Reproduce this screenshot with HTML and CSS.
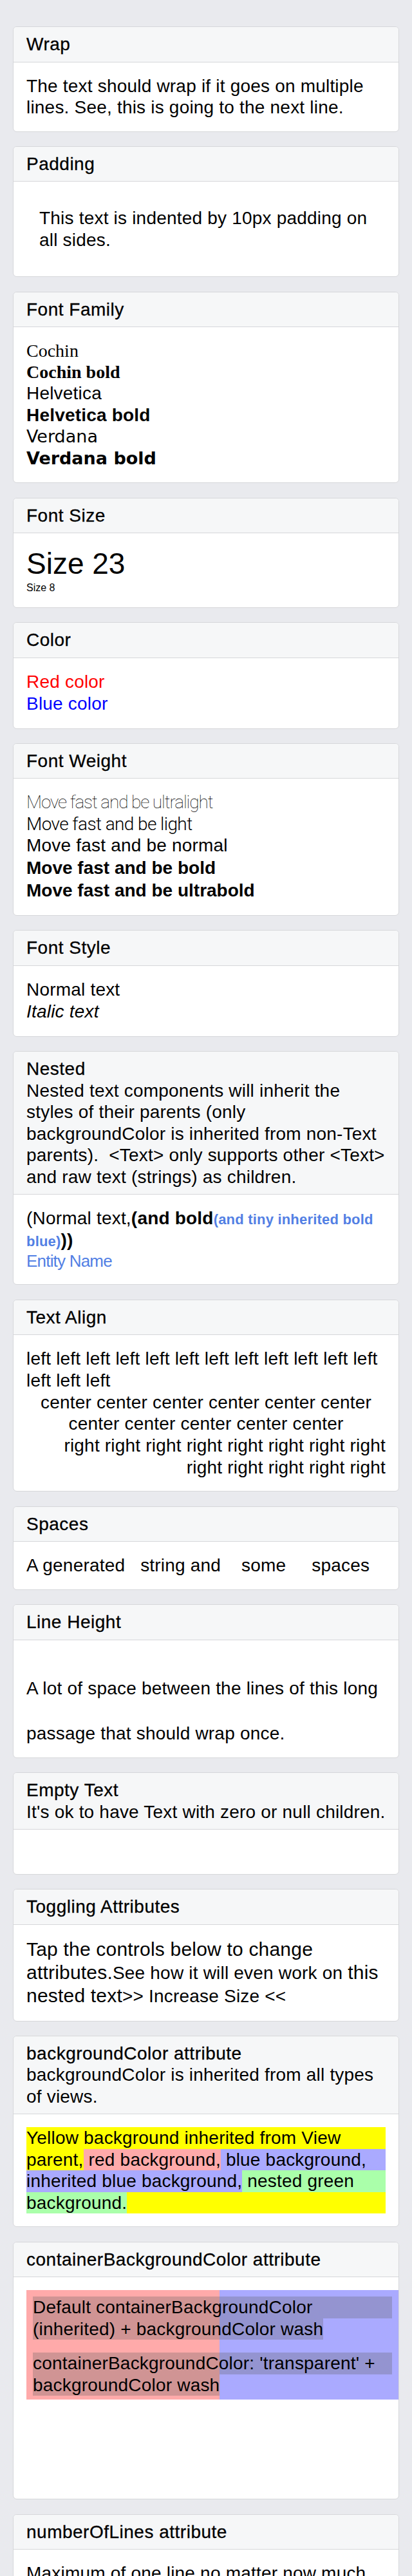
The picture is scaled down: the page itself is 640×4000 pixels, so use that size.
FILE: index.html
```html
<!DOCTYPE html>
<html lang="en">
<head>
<meta charset="utf-8">
<title>Text</title>
<link rel="stylesheet" href="styles.css">
</head>
<body>
<main class="page">

  <section class="card">
    <header class="card-head"><h2 class="card-title">Wrap</h2></header>
    <div class="card-body">
      <p class="txt">The text should wrap if it goes on multiple<br>lines. See, this is going to the next line.</p>
    </div>
  </section>

  <section class="card">
    <header class="card-head"><h2 class="card-title">Padding</h2></header>
    <div class="card-body">
      <p class="txt pad10">This text is indented by 10px padding on<br>all sides.</p>
    </div>
  </section>

  <section class="card">
    <header class="card-head"><h2 class="card-title">Font Family</h2></header>
    <div class="card-body">
      <p class="txt ff-cochin">Cochin</p>
      <p class="txt ff-cochin bold">Cochin bold</p>
      <p class="txt">Helvetica</p>
      <p class="txt bold">Helvetica bold</p>
      <p class="txt ff-verdana">Verdana</p>
      <p class="txt ff-verdana bold">Verdana bold</p>
    </div>
  </section>

  <section class="card">
    <header class="card-head"><h2 class="card-title">Font Size</h2></header>
    <div class="card-body">
      <p class="txt fs-23">Size 23</p>
      <p class="txt fs-8">Size 8</p>
    </div>
  </section>

  <section class="card">
    <header class="card-head"><h2 class="card-title">Color</h2></header>
    <div class="card-body">
      <p class="txt tall c-red">Red color</p>
      <p class="txt tall c-blue">Blue color</p>
    </div>
  </section>

  <section class="card">
    <header class="card-head"><h2 class="card-title">Font Weight</h2></header>
    <div class="card-body">
      <p class="txt fw-ultralight">Move fast and be ultralight</p>
      <p class="txt fw-light">Move fast and be light</p>
      <p class="txt">Move fast and be normal</p>
      <p class="txt fw-bold">Move fast and be bold</p>
      <p class="txt fw-bold">Move fast and be ultrabold</p>
    </div>
  </section>

  <section class="card">
    <header class="card-head"><h2 class="card-title">Font Style</h2></header>
    <div class="card-body">
      <p class="txt tall">Normal text</p>
      <p class="txt tall italic">Italic text</p>
    </div>
  </section>

  <section class="card">
    <header class="card-head">
      <h2 class="card-title">Nested</h2>
      <p class="card-desc">Nested text components will inherit the<br>styles of their parents (only<br>backgroundColor is inherited from non-Text<br>parents).&nbsp; &lt;Text&gt; only supports other &lt;Text&gt;<br>and raw text (strings) as children.</p>
    </header>
    <div class="card-body">
      <p class="txt nested">(Normal text,<b>(and bold<span class="tiny">(and tiny inherited bold<br>blue)</span>))</b></p>
      <p class="txt entity">Entity Name</p>
    </div>
  </section>

  <section class="card">
    <header class="card-head"><h2 class="card-title">Text Align</h2></header>
    <div class="card-body">
      <p class="txt align">left left left left left left left left left left left left<br>left left left</p>
      <p class="txt align center">center center center center center center<br>center center center center center</p>
      <p class="txt align right">right right right right right right right right<br>right right right right right</p>
    </div>
  </section>

  <section class="card">
    <header class="card-head"><h2 class="card-title">Spaces</h2></header>
    <div class="card-body">
      <p class="txt pre">A generated   string and    some     spaces</p>
    </div>
  </section>

  <section class="card">
    <header class="card-head"><h2 class="card-title">Line Height</h2></header>
    <div class="card-body lh-body">
      <p class="txt lh-text">A lot of space between the lines of this long<br>passage that should wrap once.</p>
    </div>
  </section>

  <section class="card">
    <header class="card-head">
      <h2 class="card-title">Empty Text</h2>
      <p class="card-desc">It's ok to have Text with zero or null children.</p>
    </header>
    <div class="card-body">
      <p class="txt empty"></p>
    </div>
  </section>

  <section class="card">
    <header class="card-head"><h2 class="card-title">Toggling Attributes</h2></header>
    <div class="card-body">
      <p class="txt toggle"><span class="t30">Tap the controls below to change<br>attributes.</span>See how it will even work on <span class="t30">this<br>nested text</span>&gt;&gt; Increase Size &lt;&lt;</p>
    </div>
  </section>

  <section class="card">
    <header class="card-head">
      <h2 class="card-title">backgroundColor attribute</h2>
      <p class="card-desc">backgroundColor is inherited from all types<br>of views.</p>
    </header>
    <div class="card-body">
      <div class="txt bg-demo">
        <div class="bg-line"><span>Yellow background inherited from View</span></div>
        <div class="bg-line"><span>parent,</span><span class="bg-red"> red background,</span><span class="bg-blue fill"> blue background,</span></div>
        <div class="bg-line"><span class="bg-blue">inherited blue background,</span><span class="bg-green fill"> nested green</span></div>
        <div class="bg-line"><span class="bg-green">background.</span></div>
      </div>
    </div>
  </section>

  <section class="card">
    <header class="card-head"><h2 class="card-title">containerBackgroundColor attribute</h2></header>
    <div class="card-body">
      <div class="cbg-bars"><div class="cbg-bar bg-red"></div><div class="cbg-bar bg-blue"></div></div>
      <div class="txt wash wash-1"><span class="wash-line full">Default containerBackgroundColor</span><span class="wash-line part">(inherited) + backgroundColor wash</span></div>
      <div class="txt wash wash-2"><span class="wash-line full">containerBackgroundColor: 'transparent' +</span><span class="wash-line part">backgroundColor wash</span></div>
    </div>
  </section>

  <section class="card">
    <header class="card-head"><h2 class="card-title">numberOfLines attribute</h2></header>
    <div class="card-body">
      <p class="txt clamp1">Maximum of one line no matter now much I write here. If I keep writing it won't go past the first line</p>
      <p class="txt clamp2">Maximum of two lines no matter now much I write here. If I keep writing it won't go past the second line</p>
      <p class="txt wrapping">No maximum lines specified no matter now much I write here. If I keep writing it will go onto the next line</p>
    </div>
  </section>

</main>
</body>
</html>
```

FILE: styles.css
```css
* { box-sizing: border-box; margin: 0; padding: 0; }
html, body { background: #e9eaee; }
body { font-family: "Liberation Sans", Arial, Helvetica, sans-serif; color: #000; }

.page { display: flex; flex-direction: column; gap: 22.4px; padding: 41px 20px 40px; }

.card { background: #fff; border: 1px solid #d6d7da; border-radius: 6px; overflow: hidden; }
.card-head { background: #f6f7f8; border-bottom: 1px solid #d6d7da; padding: 10px 20px; }
.card-title { font-size: 28px; line-height: 33.5px; font-weight: 500; letter-spacing: 0.5px; -webkit-text-stroke: 0.3px #000; }
.card-desc, .txt { font-size: 28px; line-height: 33.5px; letter-spacing: 0.2px; white-space: nowrap; font-weight: 400; }
.card-body { padding: 20px; }

.tall { line-height: 34.5px; }
.pad10 { padding: 20px; }
.bold { font-weight: 700; }
.ff-cochin { font-family: "Liberation Serif", "Times New Roman", serif; letter-spacing: 0; line-height: 33px; }
.ff-verdana { font-family: "DejaVu Sans", Verdana, sans-serif; font-size: 27px; letter-spacing: 0; line-height: 34px; }
.fs-23 { font-size: 46px; line-height: 55px; letter-spacing: 0; }
.fs-8 { font-size: 16px; line-height: 19.5px; letter-spacing: 0; }
.c-red { color: #ff0000; }
.c-blue { color: #0000ff; }

.fw-ultralight { font-family: Roboto, "Liberation Sans", sans-serif; font-weight: 100; letter-spacing: -1.1px; }
.fw-light { font-family: Roboto, "Liberation Sans", sans-serif; font-weight: 300; letter-spacing: -0.6px; }
.fw-bold { font-weight: 700; line-height: 35.5px; letter-spacing: 0; }
.italic { font-style: italic; }

.nested { line-height: 34px; }
.tiny { font-size: 22px; line-height: 22px; color: #527fe4; }
.entity { color: #527fe4; font-size: 26px; line-height: 31px; letter-spacing: -0.8px; }

.align { line-height: 33.7px; }
.center { text-align: center; }
.right { text-align: right; }
.pre { white-space: pre; }

.lh-body { padding-bottom: 2px; }
.lh-text { line-height: 70px; padding-top: 20px; }
.empty { height: 29px; }

.toggle { line-height: 35.2px; }
.t30 { font-size: 30px; }

.bg-demo { background: #ffff00; }
.bg-line { display: flex; white-space: pre; }
.bg-red { background: #ffaaaa; }
.bg-blue { background: #aaaaff; }
.bg-green { background: #aaffaa; }
.fill { flex: 1; }

.cbg-bars { display: flex; height: 170px; }
.cbg-bar { flex: 0 0 300px; }
.wash { position: relative; margin-left: 10px; width: 558px; line-height: 33.5px; }
.wash-1 { top: -160px; }
.wash-2 { top: -140px; }
.wash-line { background: rgba(100, 100, 100, 0.3); }
.wash-line.full { display: block; }
.wash-line.part { display: inline-block; }

.clamp1 { overflow: hidden; text-overflow: ellipsis; }
.clamp2 { white-space: normal; max-height: 67px; overflow: hidden; margin-top: 10px; }
.wrapping { white-space: normal; margin-top: 10px; }
```
